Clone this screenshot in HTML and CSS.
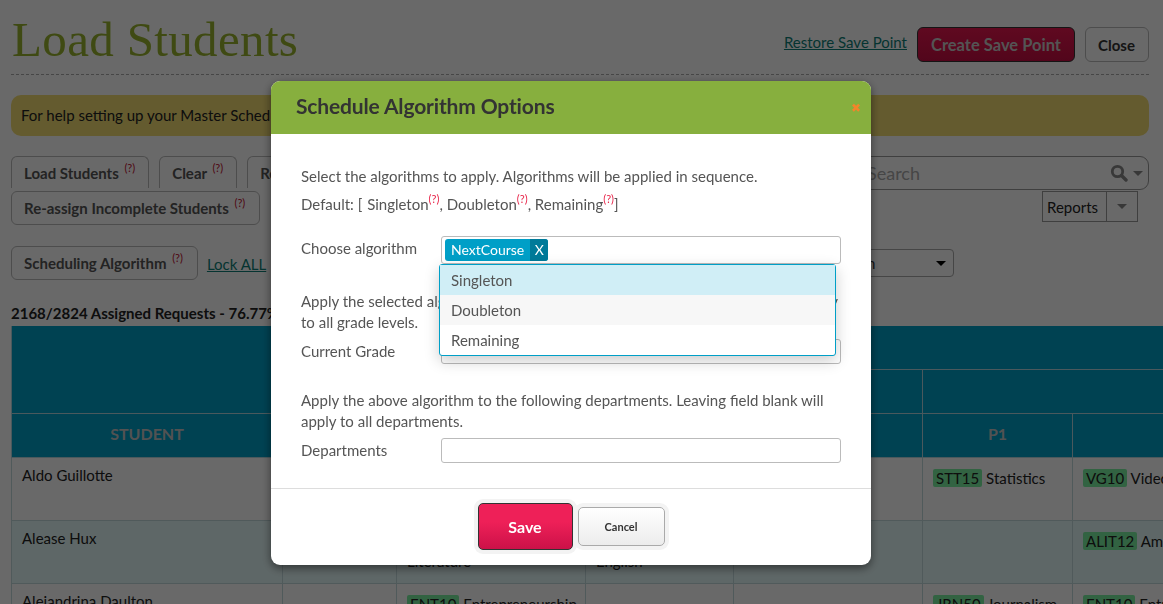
FILE: index.html
```html
<!DOCTYPE html>
<html lang="en">
<head>
    <meta charset="UTF-8">
    <meta name="viewport" content="width=device-width, initial-scale=1.0">
    <title>Load Students</title>
    <link rel="stylesheet" href="styles.css">
</head>
<body>
    <div class="page">
        <header class="page__header">
            <h1 class="page__title">Load Students</h1>
            <div class="page__actions">
                <a class="link" href="#">Restore Save Point</a>
                <button class="btn btn--primary">Create Save Point</button>
                <button class="btn btn--close">Close</button>
            </div>
        </header>

        <div class="alert">For help setting up your Master Schedule</div>

        <div class="toolbar">
            <button class="btn btn--tab">Load Students <sup class="hint">(?)</sup></button>
            <button class="btn btn--tab">Clear <sup class="hint">(?)</sup></button>
            <button class="btn btn--tab">Reset <sup class="hint">(?)</sup></button>
            <div class="search">
                <span class="search__text">Search</span>
                <svg class="search__icon" width="18" height="18" viewBox="0 0 18 18">
                    <circle cx="7.5" cy="7.5" r="5.2" fill="none" stroke="currentColor" stroke-width="2.8"/>
                    <path d="M11.5 11.5L16 16" stroke="currentColor" stroke-width="3.4" stroke-linecap="round"/>
                </svg>
                <span class="caret caret--search"></span>
            </div>
        </div>

        <div class="toolbar toolbar--second">
            <button class="btn btn--wide">Re-assign Incomplete Students <sup class="hint">(?)</sup></button>
            <div class="reports">
                <span class="reports__label">Reports</span>
                <span class="reports__arrow"><span class="caret"></span></span>
            </div>
        </div>

        <div class="toolbar toolbar--third">
            <button class="btn btn--wide">Scheduling Algorithm <sup class="hint">(?)</sup></button>
            <a class="link link--lock" href="#">Lock ALL</a>
            <div class="select">Section <span class="caret caret--dark"></span></div>
        </div>

        <div class="summary">2168/2824 Assigned Requests - 76.77%</div>

        <table class="grid">
            <colgroup>
                <col class="col-student">
                <col class="col-a">
                <col class="col-b">
                <col class="col-c">
                <col class="col-d">
                <col class="col-p1">
                <col class="col-p2">
            </colgroup>
            <thead>
                <tr class="grid__top">
                    <th rowspan="2"></th>
                    <th colspan="6"></th>
                </tr>
                <tr class="grid__mid">
                    <th colspan="4"></th>
                    <th colspan="2"></th>
                </tr>
                <tr class="grid__names">
                    <th>STUDENT</th>
                    <th></th>
                    <th></th>
                    <th></th>
                    <th></th>
                    <th>P1</th>
                    <th>P2</th>
                </tr>
            </thead>
            <tbody>
                <tr>
                    <td>Aldo Guillotte</td>
                    <td></td>
                    <td></td>
                    <td></td>
                    <td></td>
                    <td class="cell-code"><span class="code">STT15</span> Statistics</td>
                    <td class="cell-code"><span class="code">VG10</span> Video Game Design I</td>
                </tr>
                <tr class="grid__alt">
                    <td>Alease Hux</td>
                    <td></td>
                    <td class="cell-low">Literature</td>
                    <td class="cell-low">English</td>
                    <td></td>
                    <td></td>
                    <td class="cell-code"><span class="code">ALIT12</span> American Literature</td>
                </tr>
                <tr>
                    <td>Alejandrina Daulton</td>
                    <td></td>
                    <td class="cell-code cell-code--line"><span class="code">ENT10</span> Entrepreneurship</td>
                    <td></td>
                    <td></td>
                    <td class="cell-code"><span class="code">JRN50</span> Journalism</td>
                    <td class="cell-code cell-code--line"><span class="code">ENT10</span> Entrepreneurship</td>
                </tr>
            </tbody>
        </table>
    </div>

    <div class="overlay"></div>

    <div class="modal">
        <div class="modal__header">
            <h2 class="modal__title">Schedule Algorithm Options</h2>
            <span class="modal__close">&#10006;</span>
        </div>
        <div class="modal__body">
            <p class="modal__intro">Select the algorithms to apply. Algorithms will be applied in sequence.</p>
            <p class="modal__default">Default: [ <span class="modal__first">Singleton</span><sup class="hint hint--red">(?)</sup>, Doubleton<sup class="hint hint--red">(?)</sup>, Remaining<sup class="hint hint--red">(?)</sup>]</p>

            <div class="field field--algo">
                <label class="field__label">Choose algorithm</label>
                <div class="field__input field__input--algo">
                    <span class="tag"><span class="tag__name">NextCourse</span><span class="tag__x">X</span></span>
                </div>
                <ul class="dropdown">
                    <li class="dropdown__item dropdown__item--active">Singleton</li>
                    <li class="dropdown__item dropdown__item--alt">Doubleton</li>
                    <li class="dropdown__item">Remaining</li>
                </ul>
            </div>

            <p class="modal__note modal__note--grade">Apply the selected algorithm to the following grades. Leaving field blank will apply to all grade levels.</p>
            <div class="field field--below">
                <label class="field__label">Current Grade</label>
                <div class="field__input"></div>
            </div>

            <p class="modal__note modal__note--dept">Apply the above algorithm to the following departments. Leaving field blank will apply to all departments.</p>
            <div class="field field--below">
                <label class="field__label">Departments</label>
                <div class="field__input"></div>
            </div>
        </div>
        <div class="modal__footer">
            <button class="btn-save">Save</button>
            <button class="btn-cancel">Cancel</button>
        </div>
    </div>
</body>
</html>
```

FILE: styles.css
```css
* {
    box-sizing: border-box;
}

html, body {
    margin: 0;
    height: 604px;
    overflow: hidden;
}

body {
    background-color: #fff;
    font-family: 'Lato', 'Liberation Sans', sans-serif;
    font-size: 15px;
    color: #333;
}

button {
    font-family: inherit;
}

.page {
    padding: 0 14px 0 11px;
    width: 1163px;
}

.page__header {
    display: flex;
    justify-content: space-between;
    height: 75px;
    border-bottom: 1px dashed #aaa;
}

.page__title {
    margin: 15px 0 0 1px;
    font-family: 'Liberation Serif', serif;
    font-weight: normal;
    font-size: 49px;
    line-height: 50px;
    letter-spacing: 0.35px;
    color: #9ab52f;
}

.page__actions {
    display: flex;
    align-items: flex-start;
    gap: 10px;
    padding-top: 27px;
}

.link {
    color: #0d7f77;
    font-size: 15px;
    margin-top: 6px;
}

.btn {
    font-size: 15px;
    font-weight: bold;
    color: #555;
    background: #fff;
    border: 1px solid #bbb;
    border-radius: 6px;
    box-shadow: 0 0 0 3px rgba(255, 255, 255, 0.3);
    padding: 0 13px 0 12px;
}

.btn--primary {
    width: 158px;
    height: 35px;
    background: linear-gradient(#e8174f, #c70e43);
    border-color: #333;
    color: #ccc;
    font-size: 16.5px;
    padding: 0;
}

.btn--close {
    height: 35px;
    width: 64px;
    margin-left: 0;
    color: #333;
}

.alert {
    height: 41px;
    margin-top: 20px;
    padding: 11px 10px;
    background-color: #f2dc73;
    border-radius: 10px;
    color: #222;
}

.toolbar {
    display: flex;
    margin-top: 20px;
    gap: 10px;
    height: 32px;
}

.btn--tab {
    height: 32px;
    border-bottom: none;
    border-radius: 6px 6px 0 0;
}

.search {
    display: flex;
    align-items: center;
    margin-left: auto;
    width: 350px;
    height: 34px;
    border: 1px solid #999;
    border-radius: 9px;
    padding: 0 5px 0 14px;
    color: #aaa;
    font-size: 18px;
}

.search__text {
    margin-right: auto;
    margin-left: 53px;
}

.search__icon {
    color: #888;
    margin-right: 5px;
}

.caret {
    display: inline-block;
    width: 0;
    height: 0;
    border-left: 5px solid transparent;
    border-right: 5px solid transparent;
    border-top: 5px solid #888;
}

.toolbar--second {
    margin-top: 3px;
    justify-content: space-between;
    height: 34px;
}

.btn--wide {
    height: 34px;
    padding-right: 14px;
}

.reports {
    display: flex;
    height: 31px;
    margin-right: 11px;
    border: 1px solid #999;
    color: #222;
}

.reports__label {
    padding: 6px 4px;
    width: 64px;
    border-right: 1px solid #999;
}

.reports__arrow {
    display: flex;
    align-items: center;
    justify-content: center;
    width: 30px;
}

.toolbar--third {
    margin-top: 21px;
    height: 34px;
    align-items: flex-start;
    gap: 9px;
}

.link--lock {
    margin-top: 9px;
}

.select {
    display: flex;
    align-items: center;
    justify-content: space-between;
    margin: 3px 195px 0 auto;
    width: 200px;
    height: 28px;
    padding: 0 7px 0 71px;
    border: 1px solid #aaa;
    border-radius: 4px;
    color: #333;
}

.caret--dark {
    border-top-color: #000;
}

.summary {
    margin-top: 24px;
    font-size: 15px;
    font-weight: bold;
    line-height: 18px;
    color: #222;
}

.grid {
    margin-top: 4px;
    width: 1300px;
    table-layout: fixed;
    border-collapse: collapse;
}

.col-student { width: 271px; }
.col-a { width: 114px; }
.col-b { width: 189px; }
.col-c { width: 148px; }
.col-d { width: 189px; }
.col-p1 { width: 150px; }
.col-p2 { width: 239px; }

.grid th {
    background-color: #00a0c8;
    border: 1px solid #b5d9e3;
    border-top: none;
    color: #c8c8c8;
    font-size: 16px;
}

.grid__top th {
    height: 43px;
}

.grid__mid th {
    height: 44px;
}

.grid__names th {
    height: 44px;
    padding-bottom: 4px;
}

.grid td {
    height: 63px;
    padding: 7px 10px 0;
    vertical-align: top;
    border: 1px solid #c3dade;
    color: #222;
    line-height: 21px;
}

.grid__alt td {
    background-color: #e5f9f9;
}

.grid .cell-code {
    padding-top: 10px;
}

.grid .cell-code--line {
    white-space: nowrap;
    overflow: hidden;
}

.grid .cell-low {
    padding-top: 30px;
}

.code {
    display: inline-block;
    padding: 0 3px;
    background-color: #7af0a0;
    border-radius: 2px;
    line-height: 18px;
}

.hint {
    color: #c0102f;
    font-size: 11px;
    vertical-align: 7px;
    line-height: 0;
    margin-left: 2px;
    font-weight: normal;
}

.overlay {
    position: fixed;
    inset: 0;
    background-color: rgba(0, 0, 0, 0.59);
}

.modal {
    position: fixed;
    top: 81px;
    left: 271px;
    width: 600px;
    height: 484px;
    display: flex;
    flex-direction: column;
    background-color: #fff;
    border-radius: 9px;
    box-shadow: 0 3px 10px rgba(0, 0, 0, 0.5);
}

.modal__header {
    display: flex;
    align-items: center;
    justify-content: space-between;
    height: 53px;
    padding: 0 10px 4px 25px;
    background-color: #87af3e;
    border-radius: 9px 9px 0 0;
}

.modal__title {
    margin: 0;
    font-size: 21px;
    font-weight: bold;
    letter-spacing: -0.15px;
    color: #333;
}

.modal__close {
    color: #f5842a;
    font-size: 12px;
    margin-top: 4px;
}

.modal__body {
    flex: 1;
    padding: 32px 30px 0;
    color: #555;
}

.modal__intro,
.modal__default,
.modal__note {
    margin: 0;
    line-height: 21px;
}

.modal__default {
    margin-top: 7px;
}

.modal__first {
    margin-left: 1px;
}

.hint--red {
    color: #e8254a;
    margin-left: 0;
}

.field {
    display: flex;
    position: relative;
    align-items: center;
}

.field__label {
    width: 140px;
    margin-bottom: 2px;
}

.field__input {
    width: 400px;
    height: 25px;
    border: 1px solid #bbb;
    border-radius: 3px;
}

.field--algo {
    margin-top: 21px;
}

.field--algo .field__label {
    margin-bottom: 4px;
}

.field--below {
    margin-top: 6px;
}

.field__input--algo {
    height: 28px;
    padding: 2px 3px;
}

.tag {
    display: inline-flex;
    height: 22px;
    line-height: 22px;
    font-size: 14px;
    color: #fff;
    background-color: #009fc7;
    border-radius: 3px;
    overflow: hidden;
}

.tag__name {
    padding: 0 6px;
}

.tag__x {
    width: 18px;
    text-align: center;
    background-color: #007a99;
}

.dropdown {
    position: absolute;
    top: 28px;
    left: 138px;
    width: 397px;
    margin: 0;
    padding: 0;
    list-style: none;
    background-color: #fff;
    border: 1px solid #009fc7;
    border-radius: 3px;
    box-shadow: 0 5px 15px rgba(0, 0, 0, 0.2);
    z-index: 2;
}

.dropdown__item {
    height: 30px;
    padding: 0 11px;
    line-height: 30px;
}

.dropdown__item--active {
    background-color: #d0eef6;
}

.dropdown__item--alt {
    background-color: #f7f7f7;
}

.modal__note--grade {
    margin-top: 27px;
}

.modal__note--dept {
    margin-top: 26px;
}

.modal__footer {
    display: flex;
    align-items: center;
    justify-content: center;
    gap: 5px;
    height: 77px;
    border-top: 1px solid #ddd;
    padding-bottom: 2px;
}

.btn-save {
    width: 95px;
    height: 47px;
    background: linear-gradient(#ee2058 40%, #cc1148);
    border: 1px solid #333;
    border-radius: 5px;
    box-shadow: 0 0 0 4px #f3f3f3;
    color: #fff;
    font-size: 16px;
    font-weight: bold;
}

.btn-cancel {
    width: 87px;
    height: 39px;
    background: linear-gradient(#fff, #ececec);
    border: 1px solid #aaa;
    border-radius: 5px;
    box-shadow: 0 0 0 4px #f3f3f3;
    color: #333;
    font-size: 11px;
    font-weight: bold;
}
```
